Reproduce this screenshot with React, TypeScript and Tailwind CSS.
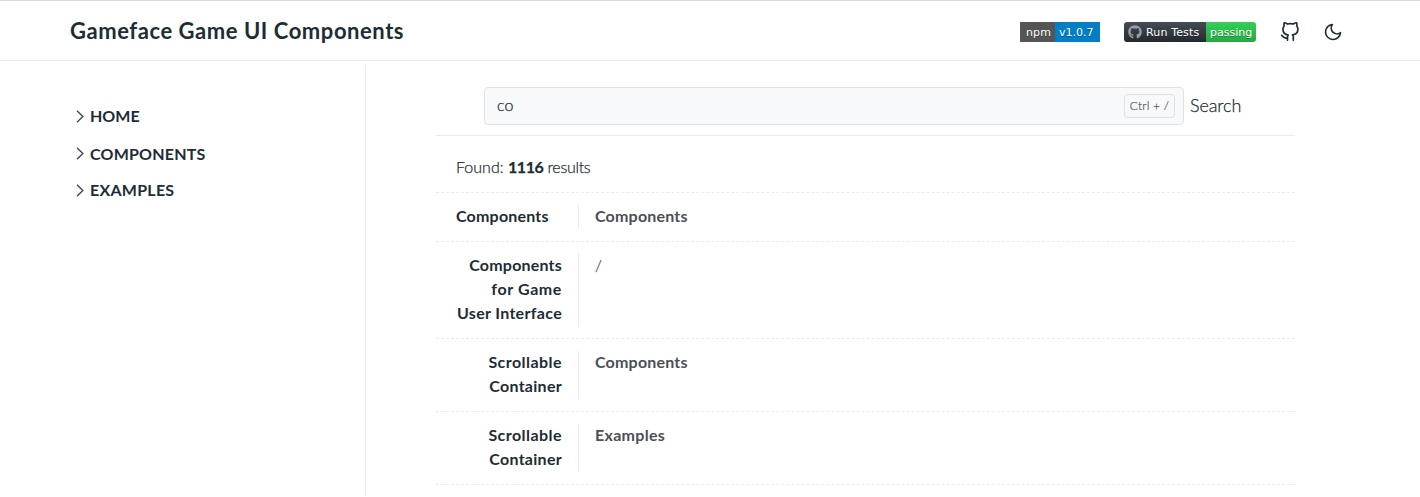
import React from "react";
import { FiGithub, FiMoon } from "react-icons/fi";
import { FaGithub } from "react-icons/fa";

const rows = [
  { title: [{ text: "Components", style: "tracking-[0.2px]" }], section: "Components", style: "tracking-[0.2px]", first: true },
  {
    title: [
      { text: "Components", style: "tracking-[0.2px]" },
      { text: "for Game", style: "tracking-[0.6px]" },
      { text: "User Interface", style: "tracking-[0.32px]" },
    ],
    section: "/",
    style: "",
  },
  {
    title: [
      { text: "Scrollable", style: "tracking-[0.45px]" },
      { text: "Container", style: "tracking-[0.28px]" },
    ],
    section: "Components",
    style: "tracking-[0.2px]",
  },
  {
    title: [
      { text: "Scrollable", style: "tracking-[0.45px]" },
      { text: "Container", style: "tracking-[0.28px]" },
    ],
    section: "Examples",
    style: "tracking-[0.3px]",
  },
];

const nav = [
  { label: "HOME", style: "h-[38px]" },
  { label: "COMPONENTS", style: "h-[37px] tracking-[0.2px]" },
  { label: "EXAMPLES", style: "h-[36px] tracking-[0.25px]" },
];

function Chevron() {
  return (
    <svg width="8" height="13" viewBox="0 0 8 13" fill="none" stroke="#495057" strokeWidth="1.5">
      <path d="M1 0.8 L6.8 6.5 L1 12.2" />
    </svg>
  );
}

function Header() {
  return (
    <header className="flex h-[61px] border-t border-t-[#d9d9d9] border-b border-b-[#e9ecef] pl-[70px]">
      <h1 className="mt-4 w-[950px] text-[22px] leading-[28px] font-bold tracking-[0.55px] whitespace-nowrap"><span>Gameface Game UI Components</span></h1>
      <div className="mt-[21px] flex h-5 w-20 font-['DejaVu_Sans'] text-[11px] leading-[21px] text-white [text-shadow:0_1px_0_rgba(1,1,1,0.3)]">
        <span className="w-[35px] bg-[#555] pl-1.5 tracking-[0.1px]"><span>npm</span></span>
        <span className="w-[45px] bg-[#007ec6] pl-1"><span>v1.0.7</span></span>
      </div>
      <div className="mt-[21px] ml-6 flex h-5 w-[132px] overflow-hidden rounded-[3px] font-['DejaVu_Sans'] text-[11px] leading-[21px] whitespace-nowrap text-white [text-shadow:0_1px_0_rgba(1,1,1,0.3)]">
        <span className="flex h-5 w-[82px] bg-linear-to-b from-[#444d56] to-[#24292e] pl-1">
          <FaGithub className="mt-[3px]" size={14} color="#959da5" />
          <span className="ml-1 tracking-[0.15px]">Run Tests</span>
        </span>
        <span className="h-5 w-[50px] bg-linear-to-b from-[#34d058] to-[#28a745] pl-1"><span>passing</span></span>
      </div>
      <FiGithub className="mt-[21px] ml-6" size={20} />
      <FiMoon className="mt-[21px] ml-[23px]" size={20} />
    </header>
  );
}

export default function App() {
  return (
    <div className="h-[497px] overflow-hidden bg-white font-['Lato',sans-serif] text-[#1d2d35]">
      <Header />
      <div className="flex">
        <nav className="mt-1 h-[431px] w-[366px] border-r border-[#e9ecef] pt-[32px] pl-[76px]">
          {nav.map((n) => (
            <div key={n.label} className={"flex items-center gap-1.5 text-base font-bold " + n.style}>
              <Chevron />
              <span>{n.label}</span>
            </div>
          ))}
        </nav>
        <main className="ml-[70px] w-[859px]">
          <div className="flex h-[75px] border-b border-[#e9ecef] pt-[26px] pl-12">
            <div className="flex h-[38px] w-[700px] items-center justify-between rounded border border-[#dee2e6] bg-[#f8f9fa] pr-2 pl-3">
              <span className="mb-0.5 font-light [-webkit-text-stroke:0.25px]">co</span>
              <kbd className="flex h-6 w-[51px] items-center justify-center rounded border border-[#dee2e6] font-['Lato',sans-serif] text-xs font-light tracking-[0.2px] text-[#495057] [-webkit-text-stroke:0.2px]"><span>Ctrl + /</span></kbd>
            </div>
            <span className="ml-1.5 text-lg leading-[37px] font-light tracking-[-0.1px] [-webkit-text-stroke:0.25px]">Search</span>
          </div>
          <p className="h-[57px] border-b border-dashed border-[#e9ecef] pt-[19px] pl-5 text-base leading-6 font-light whitespace-nowrap [-webkit-text-stroke:0.25px]">
            <span>Found: </span><strong className="font-bold tracking-[-0.4px]">1116</strong><span className="tracking-[-0.3px]"> results</span>
          </p>
          {rows.map((r, i) => (
            <div key={i} className="flex border-b border-dashed border-[#e9ecef] py-3 pl-5 text-base leading-6">
              <div className={"w-[123px] border-r border-[#e9ecef] pr-4 font-bold " + (r.first ? "text-left" : "text-right")}>
                <div className="-mt-px mb-px">
                  {r.title.map((t) => <div key={t.text} className={"whitespace-nowrap " + t.style}><span>{t.text}</span></div>)}
                </div>
              </div>
              <div className={"-mt-px pl-4 text-[#495057] " + (r.section === "/" ? "font-light [-webkit-text-stroke:0.25px] " : "font-bold ") + r.style}><span>{r.section}</span></div>
            </div>
          ))}
        </main>
      </div>
    </div>
  );
}
